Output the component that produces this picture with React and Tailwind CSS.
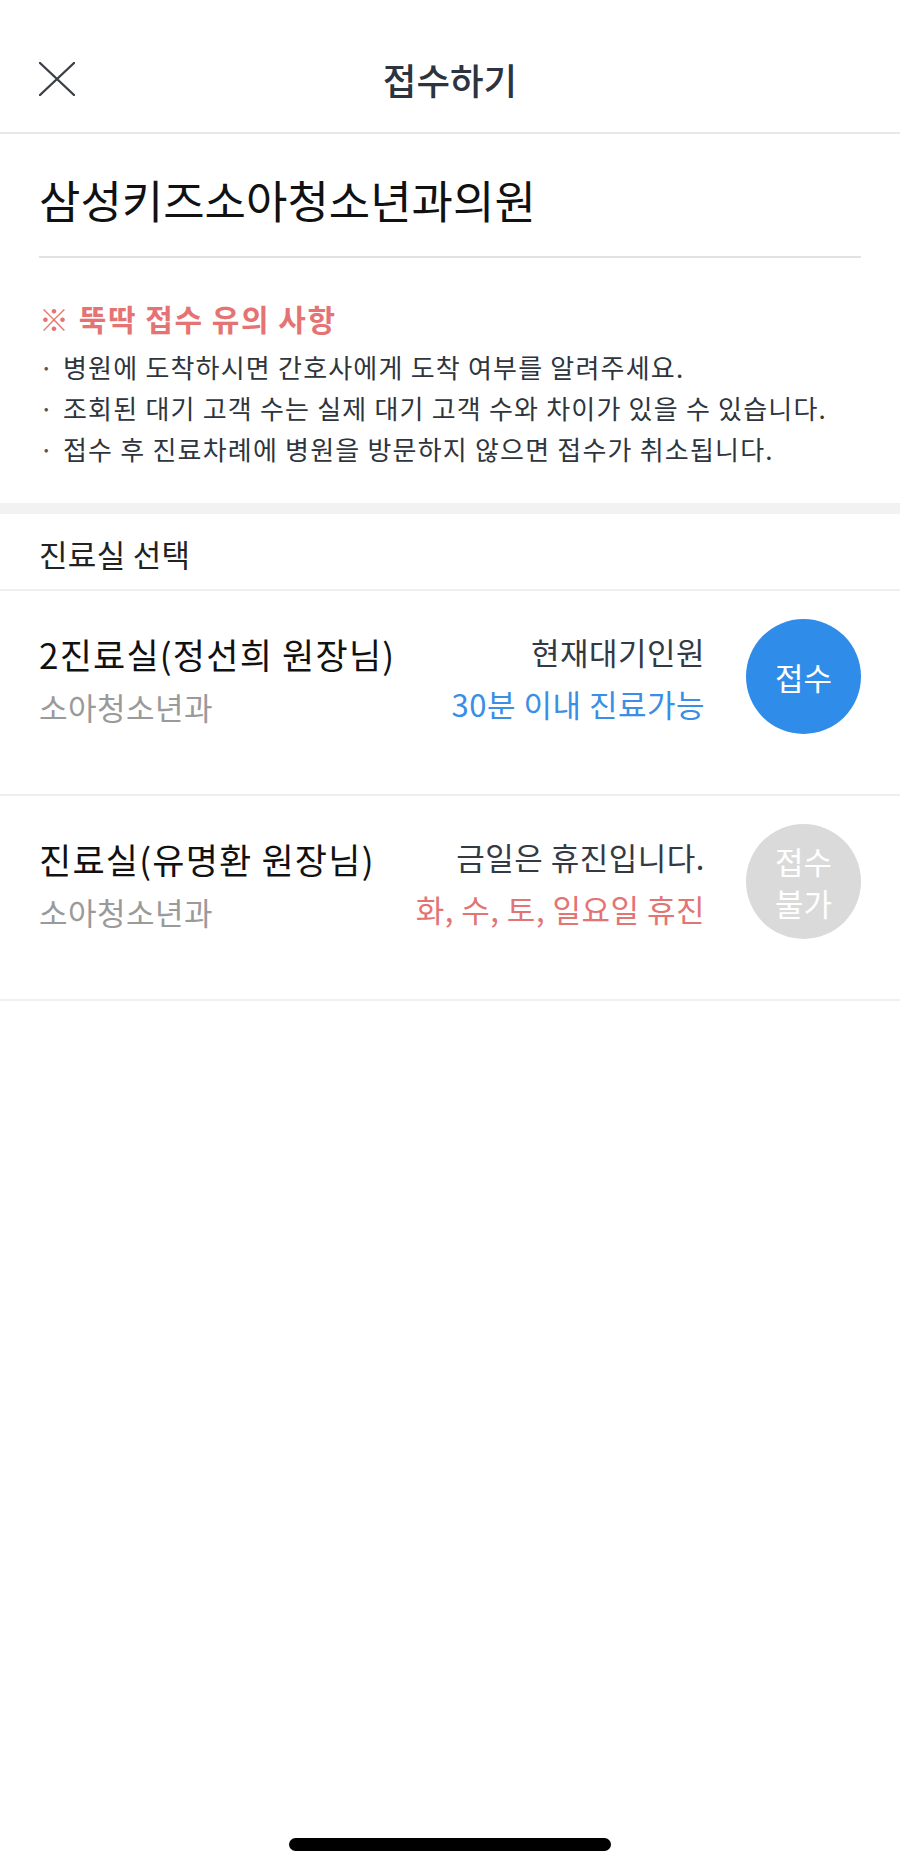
import React from 'react';

const notices = [
  '병원에 도착하시면 간호사에게 도착 여부를 알려주세요.',
  '조회된 대기 고객 수는 실제 대기 고객 수와 차이가 있을 수 있습니다.',
  '접수 후 진료차례에 병원을 방문하지 않으면 접수가 취소됩니다.',
];

const rooms = [
  {
    name: '2진료실(정선희 원장님)',
    dept: '소아청소년과',
    status: '현재대기인원',
    detail: '30분 이내 진료가능',
    open: true,
  },
  {
    name: '진료실(유명환 원장님)',
    dept: '소아청소년과',
    status: '금일은 휴진입니다.',
    detail: '화, 수, 토, 일요일 휴진',
    open: false,
  },
];

const CloseIcon = () => (
  <svg width="36" height="34" viewBox="0 0 36 34" fill="none">
    <path d="M1 1L35 33M35 1L1 33" stroke="#3a3f47" strokeWidth="2.4" strokeLinecap="round" />
  </svg>
);

const RoomRow = ({ room }) => (
  <div className="flex items-start border-b-2 border-[#efefef] px-[39px] pt-[28px] pb-[60px]">
    <div className="flex-1 pt-[15px]">
      <div className="text-[35px] leading-[40px] tracking-[1.2px] text-[#111]">{room.name}</div>
      <div className="mt-[13px] text-[31px] leading-[40px] tracking-[0.5px] text-[#9a9a9a]">{room.dept}</div>
    </div>
    <div className="pt-[13px] text-right">
      <div className="text-[31px] leading-[40px] tracking-[0.5px] text-[#333a44]">{room.status}</div>
      <div
        className={
          room.open
            ? 'mt-[12px] text-[31px] leading-[40px] tracking-[0.5px] text-[#3a8ee6]'
            : 'mt-[12px] text-[31px] leading-[40px] tracking-[0.5px] text-[#e37474]'
        }
      >
        {room.detail}
      </div>
    </div>
    <div
      className={
        room.open
          ? 'ml-[41px] flex h-[115px] w-[115px] shrink-0 items-center justify-center rounded-full bg-[#2f8ce8] text-[31px] leading-[42px] text-white'
          : 'ml-[41px] flex h-[115px] w-[115px] shrink-0 flex-col items-center justify-center rounded-full bg-[#dadada] text-[31px] leading-[42px] text-white'
      }
    >
      {room.open ? (
        <span>접수</span>
      ) : (
        <>
          <span>접수</span>
          <span>불가</span>
        </>
      )}
    </div>
  </div>
);

export default function App() {
  return (
    <div
      className="relative flex h-[1870px] w-[900px] flex-col bg-white"
      style={{ fontFamily: '"Noto Sans CJK KR", "Noto Sans", sans-serif' }}
    >
      {/* top bar */}
      <div className="relative flex h-[134px] items-center justify-center border-b-2 border-[#e8e8e8] pt-[28px]">
        <button className="absolute left-[39px] top-[62px]">
          <CloseIcon />
        </button>
        <h1 className="text-[36.5px] font-medium leading-[40px] text-[#2c3440]">접수하기</h1>
      </div>

      {/* hospital + notice */}
      <div className="px-[39px] pt-[36px] pb-[34px]">
        <div className="text-[45px] leading-[60px] text-[#111]">삼성키즈소아청소년과의원</div>
        <div className="mt-[26px] h-[2px] bg-[#e2e2e2]" />
        <div className="mt-[40px] text-[30px] font-bold leading-[40px] tracking-[1.5px] text-[#e57373]">※ 뚝딱 접수 유의 사항</div>
        <ul className="mt-[8px]">
          {notices.map((n) => (
            <li key={n} className="flex text-[26px] leading-[41px] tracking-[1.2px] text-[#2f353d]">
              <span className="w-[24px] shrink-0 text-[#555]">·</span>
              <span>{n}</span>
            </li>
          ))}
        </ul>
      </div>

      <div className="h-[11px] bg-[#f2f2f2]" />

      <div className="border-b-2 border-[#efefef] px-[39px] pt-[20px] pb-[15px] text-[31px] leading-[40px] tracking-[0.3px] text-[#222]">
        진료실 선택
      </div>

      {rooms.map((r) => (
        <RoomRow key={r.name} room={r} />
      ))}

      <div className="flex-1" />
      {/* home indicator */}
      <div className="flex justify-center pb-[19px]">
        <div className="h-[13px] w-[322px] rounded-full bg-black" />
      </div>
    </div>
  );
}
